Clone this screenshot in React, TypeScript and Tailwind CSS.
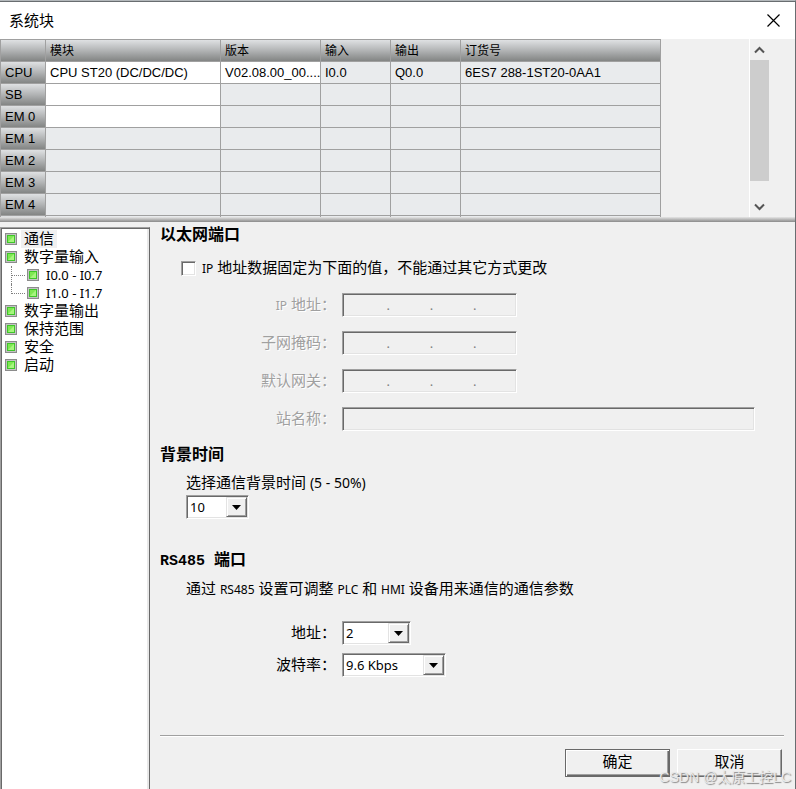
import React from "react";

const CJK = "font-['Noto_Sans','Noto_Sans_CJK_SC',sans-serif]";
const SUNKEN =
  "border border-t-[#a0a0a0] border-l-[#a0a0a0] border-r-white border-b-white shadow-[inset_1px_1px_#696969,inset_-1px_-1px_#e3e3e3]";

const rows = [
  { slot: "CPU", cells: ["CPU ST20 (DC/DC/DC)", "V02.08.00_00....", "I0.0", "Q0.0", "6ES7 288-1ST20-0AA1"], white: 2 },
  { slot: "SB", cells: ["", "", "", "", ""], white: 1 },
  { slot: "EM 0", cells: ["", "", "", "", ""], white: 1 },
  { slot: "EM 1", cells: ["", "", "", "", ""], white: 0 },
  { slot: "EM 2", cells: ["", "", "", "", ""], white: 0 },
  { slot: "EM 3", cells: ["", "", "", "", ""], white: 0 },
  { slot: "EM 4", cells: ["", "", "", "", ""], white: 0 },
  { slot: "", cells: ["", "", "", "", ""], white: 0 },
];

const LINE = "border-r border-b border-[#a0a0a0]";
const METAL = "bg-linear-to-b from-[#dfe1e3] via-[#b2b4b5] to-[#838584]";

function ModuleTable() {
  return (
    <table className="w-[661px] shrink-0 table-fixed border-separate border-spacing-0 self-start border-t border-l border-[#a0a0a0] text-left text-[13px] leading-5">
      <colgroup>
        <col className="w-[45px]" />
        <col className="w-[175px]" />
        <col className="w-[100px]" />
        <col className="w-[70px]" />
        <col className="w-[70px]" />
        <col className="w-[200px]" />
      </colgroup>
      <thead>
        <tr className="h-[22px]">
          {["", "模块", "版本", "输入", "输出", "订货号"].map((h, i) => (
            <th key={i} className={`${LINE} ${METAL} p-0 pl-1 text-xs leading-5 font-normal`}>{h}</th>
          ))}
        </tr>
      </thead>
      <tbody>
        {rows.map((row, r) => (
          <tr key={r} className="h-[22px]">
            <th scope="row" className={`${LINE} ${METAL} p-0 pl-1 font-normal`}>{row.slot}</th>
            {row.cells.map((c, i) => (
              <td key={i} className={`${LINE} ${i < row.white ? "bg-white" : "bg-[#e9ebed]"} overflow-hidden p-0 pl-1 whitespace-nowrap`}>
                {c}
              </td>
            ))}
          </tr>
        ))}
      </tbody>
    </table>
  );
}

function Chevron({ down }: { down?: boolean }) {
  return (
    <svg width="11" height="8" viewBox="0 0 11 8" fill="none" stroke="#555" strokeWidth="2">
      <path d={down ? "M1 1.5 5.5 6 10 1.5" : "M1 6.5 5.5 2 10 6.5"} />
    </svg>
  );
}

function Scrollbar() {
  return (
    <div className="mr-[26px] flex w-5 flex-col border-l border-white">
      <button aria-label="向上滚动" className="flex h-[21px] shrink-0 items-center justify-center"><Chevron /></button>
      <div className="h-[121px] bg-[#cdcdcd]" />
      <div className="flex-1" />
      <button aria-label="向下滚动" className="flex h-[21px] shrink-0 items-center justify-center"><Chevron down /></button>
    </div>
  );
}

function Led() {
  return (
    <svg width="12" height="12" viewBox="0 0 12 12" className="shrink-0">
      <rect x=".5" y=".5" width="11" height="11" fill="#fff" stroke="#8c8c8c" />
      <rect x="1.5" y="1.5" width="9" height="9" fill="#eee" stroke="#c4c4c4" />
      <rect x="2.5" y="2.5" width="7" height="7" fill="#7fe852" stroke="#3fc52a" />
      <path d="M3 9 9 3v6z" fill="#a6f57e" />
    </svg>
  );
}

function TreeItem({ label, active, children }: { label: string; active?: boolean; children?: React.ReactNode }) {
  return (
    <li>
      <button className="flex h-[18px] items-center gap-1">
        <Led />
        <span className={`flex h-[18px] items-center px-[3px] pb-0.5 ${active ? "bg-[#f0f0f0]" : ""}`}>{label}</span>
      </button>
      {children}
    </li>
  );
}

function TreeChild({ label }: { label: string }) {
  return (
    <li className="ml-1.5 flex h-[18px] border-l border-dotted border-[#808080] last:h-[10px] last:overflow-visible">
      <button className="flex h-[18px] items-center">
        <span className="mr-0.5 w-[13px] border-t border-dotted border-[#808080]" />
        <Led />
        <span className="pl-[7px] text-[13px]">{label}</span>
      </button>
    </li>
  );
}

function Tree() {
  return (
    <nav className="mt-[5px] w-[150px] shrink-0 border-t border-r border-l border-t-[#a0a0a0] border-r-[#696969] border-l-[#a0a0a0] bg-white pt-0.5 pl-1 text-[15px] leading-[18px] whitespace-nowrap shadow-[inset_1px_1px_#696969,inset_-2px_0_#e9e9e9]">
      <ul>
        <TreeItem label="通信" active />
        <TreeItem label="数字量输入">
          <ul className="mb-2">
            <TreeChild label="I0.0 - I0.7" />
            <TreeChild label="I1.0 - I1.7" />
          </ul>
        </TreeItem>
        <TreeItem label="数字量输出" />
        <TreeItem label="保持范围" />
        <TreeItem label="安全" />
        <TreeItem label="启动" />
      </ul>
    </nav>
  );
}

function Heading({ children, className }: { children: React.ReactNode; className?: string }) {
  return <h2 className={`pl-[10px] text-base leading-6 font-bold ${className ?? ""}`}>{children}</h2>;
}

function Latin({ children }: { children: React.ReactNode }) {
  return <span className="text-xs leading-none">{children}</span>;
}

const FIELD_LABEL = "w-[192px] shrink-0 pr-1.5 pb-0.5 text-right";
const DISABLED = "text-[#a0a0a0] [text-shadow:1px_1px_#fff]";

function IpRow({ id, label }: { id: string; label: React.ReactNode }) {
  return (
    <div className="flex h-6 items-center">
      <label htmlFor={id} className={`${FIELD_LABEL} ${DISABLED}`}>{label}</label>
      <div className={`flex h-6 w-[175px] items-center pl-1 text-[13px] text-[#808080] ${SUNKEN}`}>
        {[0, 1, 2, 3].map((n) => (
          <React.Fragment key={n}>
            <input id={n === 0 ? id : undefined} aria-label={n === 0 ? undefined : `${id} ${n + 1}`} disabled className="w-0 min-w-0 flex-1 bg-transparent" />
            {n < 3 && <span className="w-1 text-center">.</span>}
          </React.Fragment>
        ))}
      </div>
    </div>
  );
}

function Combo({ id, value, width }: { id: string; value: string; width: string }) {
  return (
    <div className={`relative h-6 bg-white ${width} ${SUNKEN}`}>
      <select id={id} defaultValue={value} className="block h-[22px] w-full appearance-none bg-transparent pl-[3px] text-[13px] leading-[18px]">
        <option>{value}</option>
      </select>
      <span className="pointer-events-none absolute top-px right-px bottom-px flex w-[21px] items-center justify-center border border-t-[#e3e3e3] border-r-[#696969] border-b-[#696969] border-l-[#e3e3e3] bg-[#f0f0f0] pr-px shadow-[inset_1px_1px_#fff,inset_-1px_-1px_#a0a0a0]">
        <svg width="9" height="5" viewBox="0 0 9 5"><path d="M0 0h9L4.500 5z" /></svg>
      </span>
    </div>
  );
}

const BUTTON = "h-7 w-[105px] border bg-[#f0f0f0] pb-1 leading-5";

export default function App() {
  return (
    <div className={`relative flex min-h-screen flex-col overflow-hidden border-t border-r border-t-[#b3b8bb] border-r-[#696d70] bg-[#f0f0f0] text-black ${CJK}`}>
      <header className="flex h-[38px] shrink-0 items-center justify-between border-t border-[#696d70] bg-white pr-[15px] pl-[9px] text-[15px]">
        <h1>系统块</h1>
        <button aria-label="关闭">
          <svg width="13" height="13" viewBox="0 0 13 13" stroke="#000" strokeWidth="1.200"><path d="M.5.5l12 12M12.500.5l-12 12" /></svg>
        </button>
      </header>

      <section className="flex h-[178px] shrink-0 justify-between overflow-hidden font-['Liberation_Sans','Noto_Sans_CJK_SC',sans-serif]">
        <ModuleTable />
        <Scrollbar />
      </section>
      <div className="h-[5px] shrink-0 bg-linear-to-b from-[#e6e6e6] to-[#8a8a8a]" />

      <div className="flex flex-1">
        <Tree />
        <main className="flex min-w-0 flex-1 flex-col text-[15px] leading-6">
          <Heading>以太网端口</Heading>
          <div className="mt-[10px] flex h-6 items-center pl-[31px]">
            <input id="fixed" type="checkbox" className={`mr-1.5 size-[15px] appearance-none bg-white ${SUNKEN}`} />
            <label htmlFor="fixed" className="pb-0.5"><Latin>IP</Latin> 地址数据固定为下面的值，不能通过其它方式更改</label>
          </div>
          <div className="mt-[13px] flex flex-col gap-[14px]">
            <IpRow id="ip" label={<><Latin>IP</Latin> 地址：</>} />
            <IpRow id="mask" label="子网掩码：" />
            <IpRow id="gateway" label="默认网关：" />
            <div className="flex h-6 items-center pr-10">
              <label htmlFor="station" className={`${FIELD_LABEL} ${DISABLED}`}>站名称：</label>
              <input id="station" disabled className={`h-6 min-w-0 flex-1 ${SUNKEN}`} />
            </div>
          </div>

          <Heading className="mt-[11px]">背景时间</Heading>
          <div className="mt-1 pl-9">
            <label htmlFor="background" className="mb-px block h-6">选择通信背景时间 <span className="text-sm leading-none">(5 - 50%)</span></label>
            <Combo id="background" value="10" width="w-[63px]" />
          </div>

          <Heading className="mt-7 h-6">
            <span className="font-['Liberation_Mono',monospace] text-[15px] leading-none">RS485 </span>端口
          </Heading>
          <p className="mt-[5px] h-6 pl-9">
            通过 <Latin>RS485</Latin> 设置可调整 <Latin>PLC</Latin> 和 <Latin>HMI</Latin> 设备用来通信的通信参数
          </p>
          <div className="mt-[21px] flex flex-col gap-2">
            <div className="flex h-6 items-center">
              <label htmlFor="address" className={FIELD_LABEL}>地址：</label>
              <Combo id="address" value="2" width="w-[69px]" />
            </div>
            <div className="flex h-6 items-center">
              <label htmlFor="baud" className={FIELD_LABEL}>波特率：</label>
              <Combo id="baud" value="9.6 Kbps" width="w-[104px]" />
            </div>
          </div>

          <footer className="mt-auto mr-[11px] ml-[10px] flex justify-end gap-[7px] border-t border-[#a0a0a0] pt-[13px] pr-0.5 pb-3 shadow-[inset_0_1px_#fff]">
            <button className={`${BUTTON} border-[#696969] shadow-[inset_1px_1px_#fff,inset_-1px_-1px_#696969,inset_-2px_-2px_#a0a0a0]`}>确定</button>
            <button className={`${BUTTON} border-t-white border-r-[#696969] border-b-[#696969] border-l-white shadow-[inset_-1px_-1px_#a0a0a0]`}>取消</button>
          </footer>
        </main>
      </div>
      <span className="pointer-events-none absolute right-1 bottom-0.5 font-['Liberation_Sans','Noto_Sans_CJK_SC',sans-serif] text-sm leading-5 text-[#e9e9e9] [text-shadow:1px_1px_1px_#888]">CSDN @太原工控LC</span>
    </div>
  );
}
